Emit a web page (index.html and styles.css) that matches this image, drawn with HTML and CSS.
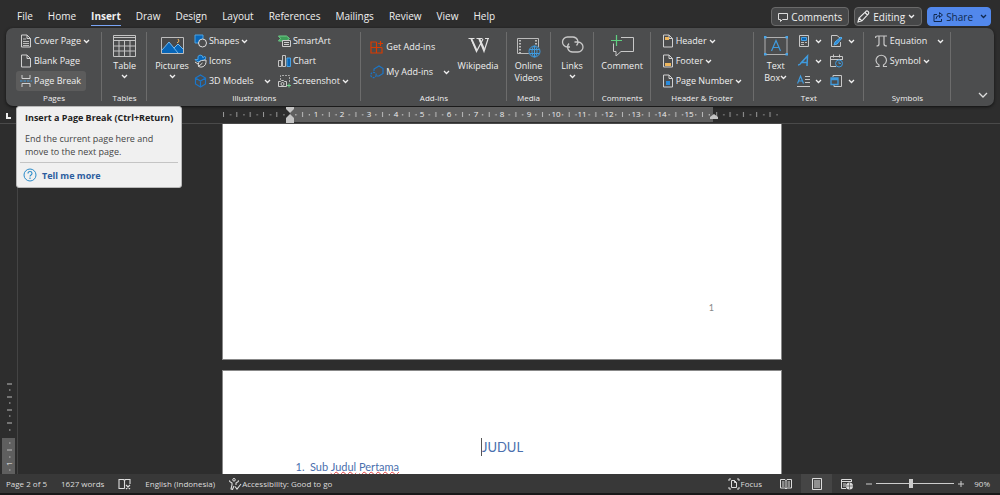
FILE: index.html
```html
<!DOCTYPE html>
<html lang="en">
<head>
<meta charset="utf-8">
<title>Document editor</title>
<link rel="stylesheet" href="styles.css">
</head>
<body>
<svg class="defs" aria-hidden="true">
  <symbol id="chev" viewBox="0 0 7 7"><path d="M1 2l2.500 2.500L6 2" fill="none" stroke="currentColor" stroke-width="1.300"/></symbol>
  <symbol id="sheet" viewBox="0 0 12 14"><path d="M1.500 1h5.500l3.500 3.500V13h-9zM7 1v3.500h3.500" fill="none" stroke="#d0d0d0"/></symbol>
</svg>

<header class="topbar">
  <nav class="tabs">
    <a href="#">File</a><a href="#">Home</a><a href="#" class="current">Insert</a><a href="#">Draw</a><a href="#">Design</a><a href="#">Layout</a><a href="#">References</a><a href="#">Mailings</a><a href="#">Review</a><a href="#">View</a><a href="#">Help</a>
  </nav>
  <div class="actions">
    <button class="action"><svg width="10" height="10" viewBox="0 0 10 10"><path d="M.5 1.500h9v6H4.500L2.500 9.500v-2h-2z" fill="none" stroke="#ddd"/></svg>Comments</button>
    <button class="action edit"><svg width="13" height="13" viewBox="0 0 13 13"><path d="M1 12l1-4L9 1.300q1-.8 2 .1l.4.4q.8 1 0 2L5 10.800zM8 2.500l2.500 2.500M2 8l3 2.800" fill="none" stroke="#eee" stroke-width="1.100"/></svg>Editing<svg class="chev"><use href="#chev"/></svg></button>
    <button class="action share"><svg width="10" height="10" viewBox="0 0 10 10"><path d="M4 2.500H1v7h7.500V7M3 7q0-3.500 3.500-3.500V5.500L9.500 3 6.500.600V2.500" fill="none" stroke="#10284e"/></svg>Share<svg class="chev far"><use href="#chev"/></svg></button>
  </div>
</header>

<main class="ribbon">
  <section class="group">
    <div class="body pages">
      <div class="stack">
        <button class="cmd"><svg width="12" height="14"><use href="#sheet"/><path d="M3 5h3M3 7.500h6M3 9.500h6M3 11.500h6" stroke="#bbb"/></svg>Cover Page<svg class="chev"><use href="#chev"/></svg></button>
        <button class="cmd"><svg width="12" height="14"><use href="#sheet"/></svg>Blank Page</button>
        <button class="cmd hover"><svg width="12" height="14"><path d="M2 1v3.500h8V1M2 13V9.500h8V13" fill="none" stroke="#d0d0d0"/><path d="M0 7h12" stroke="#3f9bdf" stroke-dasharray="2.500 1"/></svg>Page Break</button>
      </div>
    </div>
    <h2>Pages</h2>
  </section>

  <section class="group">
    <div class="body center">
      <button class="big"><svg width="23" height="24"><path d="M.5 1.500h22v21H.5zM.5 3.500h22M.5 6.500h22M.5 12h22M.5 17h22M6 6v16M11.500 6v16M17 6v16" fill="none" stroke="#c4c4c4"/></svg>Table<svg class="chev"><use href="#chev"/></svg></button>
    </div>
    <h2>Tables</h2>
  </section>

  <section class="group">
    <div class="body illus">
      <button class="big"><svg width="23" height="24"><path d="M.5 3.500h22v16H.5z" fill="#48494a" stroke="#bdbdbd"/><path d="M1 16l7-8 5 6 4-4 5 5v4H1z" fill="#0866b8"/><path d="M1 16l7-8 9 11M13 14l4-4 5 5" fill="none" stroke="#73b9ee"/><path d="M17 5l1 2-1 1.500h-1" fill="none" stroke="#f0b45a"/></svg>Pictures<svg class="chev"><use href="#chev"/></svg></button>
      <div class="stack models">
        <button class="cmd"><svg width="13" height="14"><path d="M1 1h8v8H1z" fill="#0866b8" stroke="#4ba2e2"/><circle cx="8.500" cy="9" r="4" fill="#4c4d4e" stroke="#ddd"/></svg>Shapes<svg class="chev"><use href="#chev"/></svg></button>
        <button class="cmd"><svg width="13" height="14"><path d="M1 5.500h3q-1-4 2-4.500 3 0 3 3l1.500-2L12 4 9 7.500H3z" fill="#0866b8" stroke="#4ba2e2"/><path d="M4.500 12.500q-1-5 3-6l4.500-.5q.5 6-4 7-2 .3-3.500-.5l4-3.500M1 8l3 2" fill="#4c4d4e" stroke="#ddd"/></svg>Icons</button>
        <button class="cmd"><svg width="13" height="14"><path d="M6.500 1l5 3v6l-5 3-5-3V4zM1.500 4l5 3 5-3M6.500 7v6" fill="none" stroke="#1b76c8" stroke-width="1.200"/></svg>3D Models<svg class="chev far"><use href="#chev"/></svg></button>
      </div>
      <div class="stack">
        <button class="cmd"><svg width="13" height="14"><path d="M.500 2h8l3 2.500-3 2.500H.500l2-2.500z" fill="#3f9c59" stroke="#6fd08a"/><path d="M4.500 6.500h8v6h-8zM6 8.500h5M6 10.500h5" fill="#4c4d4e" stroke="#ccc"/></svg>SmartArt</button>
        <button class="cmd"><svg width="13" height="14"><path d="M.5 6.500h3v6h-3zM4.500 1.500h3v11h-3z" fill="none" stroke="#c4c4c4"/><path d="M9 4h3.500v8.500H9z" fill="#0866b8" stroke="#4ba2e2"/></svg>Chart</button>
        <button class="cmd"><svg width="13" height="14"><path d="M2.500 6V1.500h9V9" fill="none" stroke="#aaa" stroke-dasharray="2 1"/><path d="M.5 7.500h2l1-1h2l1 1h2v5h-8z" fill="#4c4d4e" stroke="#ccc"/><circle cx="4.500" cy="10" r="1.500" fill="none" stroke="#ccc"/><path d="M11 9.500v4M9 11.500h4" stroke="#6fd08a"/></svg>Screenshot<svg class="chev"><use href="#chev"/></svg></button>
      </div>
    </div>
    <h2>Illustrations</h2>
  </section>

  <section class="group">
    <div class="body addins">
      <div class="stack loose">
        <button class="cmd"><svg width="14" height="14"><path d="M6.500 2H1v11h11V7.500M1 7.500h11M6.500 2v11M10.500 1v5M8 3.500h5" fill="none" stroke="#d83b01" stroke-width="1.200"/></svg>Get Add-ins</button>
        <button class="cmd"><svg width="14" height="14"><path d="M4 6V4l5-3 4 2.500v5L9 11H7" fill="none" stroke="#1b76c8" stroke-width="1.200"/><circle cx="3.500" cy="10" r="2.700" fill="none" stroke="#1b76c8" stroke-width="1.200" stroke-dasharray="2 1"/></svg>My Add-ins<svg class="chev far"><use href="#chev"/></svg></button>
      </div>
      <button class="big"><svg width="23" height="24"><path d="M1.500 4.500h6M9.500 4.500h6M18 4.500h4M4 4.500l5.500 13L16 5M12 5l5 12.500L21 5" fill="none" stroke="#e2e2e2" stroke-width="1.200"/><path d="M4.500 5l5 11M12.500 5l5 11" stroke="#e2e2e2" stroke-width="1.800"/></svg>Wikipedia</button>
    </div>
    <h2>Add-ins</h2>
  </section>

  <section class="group">
    <div class="body center">
      <button class="big"><svg width="24" height="24"><path d="M.5 4.500h21v15H.5z" fill="none" stroke="#bbb"/><path d="M3 6v13M19 6v8" stroke="#ddd" stroke-width="1.500" stroke-dasharray="1.500 1.500"/><circle cx="17.500" cy="17.500" r="6" fill="#4c4d4e"/><g fill="none" stroke="#3f9bdf"><circle cx="17.500" cy="17.500" r="5.500"/><ellipse cx="17.500" cy="17.500" rx="2.500" ry="5.500"/><path d="M12.500 15.500h10M12.500 19.500h10M17.500 12v11"/></g></svg><span>Online<br>Videos</span></button>
    </div>
    <h2>Media</h2>
  </section>

  <section class="group">
    <div class="body center">
      <button class="big"><svg width="23" height="24"><path d="M9 13H6.500a5 5 0 010-10H12a5 5 0 013.500 8.500M13.500 8H17a5 5 0 010 10h-5.500A5 5 0 018 9.500" fill="none" stroke="#c8c8c8" stroke-width="1.300"/></svg>Links<svg class="chev"><use href="#chev"/></svg></button>
    </div>
  </section>

  <section class="group">
    <div class="body center">
      <button class="big"><svg width="24" height="24"><path d="M11 3.500h12.500v14H11l-5 4.500v-4.500H3.500v-8" fill="none" stroke="#c8c8c8"/><path d="M6.500 1v11M1 6.500h11" stroke="#5fd080" stroke-width="1.200"/></svg>Comment</button>
    </div>
    <h2>Comments</h2>
  </section>

  <section class="group">
    <div class="body hf">
      <div class="stack">
        <button class="cmd"><svg width="12" height="14"><use href="#sheet"/><path d="M3 3h4v3H3z" fill="#eeb65d"/></svg>Header<svg class="chev"><use href="#chev"/></svg></button>
        <button class="cmd"><svg width="12" height="14"><use href="#sheet"/><path d="M3 9h6v3H3z" fill="#eeb65d"/></svg>Footer<svg class="chev"><use href="#chev"/></svg></button>
        <button class="cmd"><svg width="12" height="14"><use href="#sheet"/><path d="M4 7h4v4H4z" fill="#2a8bdc"/></svg>Page Number<svg class="chev"><use href="#chev"/></svg></button>
      </div>
    </div>
    <h2>Header &amp; Footer</h2>
  </section>

  <section class="group">
    <div class="body textg">
      <button class="big"><svg width="26" height="24"><path d="M2 3.500h22v17H2z" fill="none" stroke="#b0b0b0"/><path d="M1 2h2.500v2.500H1zM22.500 2H25v2.500h-2.500zM1 19h2.500v2.500H1zM22.500 19H25v2.500h-2.500z" fill="#49a6e9"/><path d="M8.500 17L13 6.500 17.500 17M10 13.500h6" fill="none" stroke="#3f9bdf" stroke-width="1.200"/></svg><span>Text<br>Box<svg class="chev"><use href="#chev"/></svg></span></button>
      <div class="stack">
        <button class="cmd" aria-label="Quick Parts"><svg width="13" height="14"><path d="M2.500 1.500h9v11h-9z" fill="none" stroke="#c8c8c8"/><path d="M4.500 3.500h5v3h-5z" fill="#0866b8" stroke="#4ba2e2"/><path d="M4 8.500h3M4 10.500h3M8 8.500h2" stroke="#bbb"/></svg><svg class="chev"><use href="#chev"/></svg></button>
        <button class="cmd" aria-label="WordArt"><svg width="13" height="14"><path d="M1 11q2 0 3-2l6.500-7-.5 10M4 8.500h6.500" fill="none" stroke="#3f9bdf" stroke-width="1.500"/></svg><svg class="chev"><use href="#chev"/></svg></button>
        <button class="cmd" aria-label="Drop Cap"><svg width="13" height="14"><path d="M.5 9.500L3.500 2l3 7.500M1.500 7h4" fill="none" stroke="#3f9bdf" stroke-width="1.200"/><path d="M8 2.500h5M8 5.500h5M8 8.500h5M0 12.500h13" stroke="#c8c8c8"/></svg><svg class="chev"><use href="#chev"/></svg></button>
      </div>
      <div class="stack">
        <button class="cmd" aria-label="Signature Line"><svg width="13" height="14"><path d="M7 1.500H1.500v11h9V8M7 1.500L10 4" fill="none" stroke="#c8c8c8"/><path d="M4 11l1-3 6-5 1 1-5 6z" fill="#2a8bdc" stroke="#55adea"/></svg><svg class="chev"><use href="#chev"/></svg></button>
        <button class="cmd" aria-label="Date and Time"><svg width="13" height="14"><path d="M6 12.500H.5v-10h12V6M.5 5.500h12M3.500.500v3M9.500.500v3" fill="none" stroke="#c8c8c8"/><circle cx="9" cy="9.500" r="3.500" fill="#4c4d4e" stroke="#3f9bdf"/><path d="M9 7.500v2h2" fill="none" stroke="#3f9bdf"/></svg></button>
        <button class="cmd" aria-label="Object"><svg width="13" height="14"><path d="M3 3V1.500h8.500v11H4V11" fill="none" stroke="#c8c8c8"/><path d="M1 4h7v6.500H1zM1 5.500h7" fill="#4c4d4e" stroke="#3f9bdf" stroke-width="1.300"/></svg><svg class="chev"><use href="#chev"/></svg></button>
      </div>
    </div>
    <h2>Text</h2>
  </section>

  <section class="group">
    <div class="body sym">
      <div class="stack">
        <button class="cmd"><svg width="13" height="14"><path d="M.5 4q0-2 2-2h9.500M4 2.500V10q0 2-2.500 2M9 2.500V10q0 2 3 2" fill="none" stroke="#c8c8c8" stroke-width="1.200"/></svg>Equation<svg class="chev far"><use href="#chev"/></svg></button>
        <button class="cmd"><svg width="13" height="14"><path d="M.5 12.500H4V11Q1 9 1 6.500A5.200 5.200 0 0111.500 6.500Q11.500 9 8.500 11v1.500H12" fill="none" stroke="#c8c8c8" stroke-width="1.200"/></svg>Symbol<svg class="chev"><use href="#chev"/></svg></button>
      </div>
    </div>
    <h2>Symbols</h2>
  </section>

  <div class="tail"><button aria-label="Collapse ribbon"><svg width="10" height="8"><path d="M1 2l4 4 4-4" fill="none" stroke="#ddd" stroke-width="1.300"/></svg></button></div>
</main>

<div class="tip" role="tooltip">
  <strong>Insert a Page Break (Ctrl+Return)</strong>
  <p>End the current page here and<br>move to the next page.</p>
  <a href="#"><svg width="14" height="14"><circle cx="7" cy="7" r="6" fill="none" stroke="#2a8bc9"/><path d="M5 5.500q0-2 2-2t2 1.800q0 1-1 1.700t-1 1.500M7 9.500V11" fill="none" stroke="#2a8bc9" stroke-width="1.100"/></svg>Tell me more</a>
</div>

<div class="ruler">
  <svg class="tabstop" width="18" height="17"><path d="M7 6v5h4" fill="none" stroke="#eee" stroke-width="2"/></svg>
  <div class="scale">
    <svg width="560" height="17" viewBox="0 0 560 17">
      <defs>
        <pattern id="edge" x="1" width="13.330" height="17" patternUnits="userSpaceOnUse"><path d="M.5 5v5" stroke="#999"/><path d="M7 7h1.200v1.500H7z" fill="#888"/></pattern>
        <pattern id="cm" x="67.300" width="26.660" height="17" patternUnits="userSpaceOnUse"><path d="M6 7h1.200v1.500H6zM19.500 7h1.200v1.500h-1.200z" fill="#bbb"/><path d="M13.300 5v5" stroke="#bbb"/></pattern>
      </defs>
      <path d="M0 0h63v17H0zM493 0h63v17h-63z" fill="url(#edge)"/>
      <path d="M68 0h423v15H68z" fill="#5f5f5f"/>
      <path d="M68 0h423v15H68z" fill="url(#cm)"/>
      <path d="M64 0h8v2l-4 4-4-4zM64 16v-5l4-4 4 4v5zM488 12v-2l4-3 4 3v2z" fill="#c4c4c4"/>
      <g class="nums"><text x="94" y="10">1</text><text x="120" y="10">2</text><text x="147" y="10">3</text><text x="174" y="10">4</text><text x="200" y="10">5</text><text x="227" y="10">6</text><text x="254" y="10">7</text><text x="280" y="10">8</text><text x="307" y="10">9</text><text x="334" y="10">10</text><text x="360" y="10">11</text><text x="387" y="10">12</text><text x="414" y="10">13</text><text x="440" y="10">14</text><text x="467" y="10">15</text></g>
    </svg>
  </div>
</div>

<div class="workspace">
  <div class="vruler">
    <svg width="17" height="94" viewBox="0 0 17 94">
      <path d="M2 58h13v36H2z" fill="#5f5f5f"/>
      <path d="M7 4h5M7 17h5M7 30h5M7 43h5M7 70h5" stroke="#bbb"/>
      <path d="M9 10h1.500M9 23h1.500M9 36h1.500M9 50h1.500M9 63h1.500M9 77h1.500M9 90h1.500" stroke="#bbb"/>
      <text class="vnum" transform="translate(12 86) rotate(-90)">1</text>
    </svg>
  </div>
  <div class="canvas">
    <article class="page first"><span class="folio">1</span></article>
    <article class="page second">
      <h1><span class="caret"></span>JUDUL</h1>
      <ol><li>Sub <u>Judul</u> <u>Pertama</u></li></ol>
    </article>
  </div>
</div>

<footer class="status">
  <span>Page 2 of 5</span>
  <span>1627 words</span>
  <button aria-label="Proofing"><svg width="13" height="12"><path d="M6.500 10.500H1v-9h4.500l1 1 1-1H12V6M6.500 2v8.500M8 7l4 4M12 7l-4 4" fill="none" stroke="#ddd" stroke-width="1.100"/></svg></button>
  <span>English (Indonesia)</span>
  <button class="access"><svg width="13" height="12"><circle cx="5" cy="1.800" r="1.300" fill="none" stroke="#ddd"/><path d="M1 2.500q-1 1 .5 1.500L3 5v2l-1 4 1.500.5L5 8M9 2.500q1 1-.5 1.500L7 5v2M6 8.500l2 2.500 4-5" fill="none" stroke="#ddd" stroke-width="1.100"/></svg>Accessibility: Good to go</button>
  <div class="views">
    <button class="focus"><svg width="12" height="12"><path d="M3 1H1v2M9 1h2v2M3 11H1V9M9 11h2V9" fill="none" stroke="#ddd"/><path d="M3.500 2.500h3l2 2v5h-5zM6.500 2.500v2h2" fill="none" stroke="#ddd"/></svg>Focus</button>
    <button class="view" aria-label="Read Mode"><svg width="12" height="12"><path d="M.5 1.500H5l1 1 1-1h4.500v8.500H7l-1 1-1-1H.5zM6 2v9M2 4h2.500M2 6h2.500M2 8h2.500M7.500 4H10M7.500 6H10M7.500 8H10" fill="none" stroke="#ddd"/></svg></button>
    <button class="view on" aria-label="Print Layout"><svg width="10" height="12"><path d="M.5.5h9v11h-9zM2 3h6M2 5h6M2 7h6M2 9h6" fill="none" stroke="#ddd"/></svg></button>
    <button class="view" aria-label="Web Layout"><svg width="13" height="12"><path d="M5 10.500H.5v-9h10V4M.5 3.500h10M2 6h3M2 8h3" fill="none" stroke="#ddd"/><circle cx="8.500" cy="8" r="3.500" fill="#ddd"/><path d="M5 8h7M8.500 4.500v7" stroke="#555" stroke-width=".7"/></svg></button>
    <button class="step" aria-label="Zoom out"><svg width="8" height="8"><path d="M1 4h6" stroke="#ccc"/></svg></button>
    <input type="range" min="0" max="100" value="45" aria-label="Zoom">
    <button class="step" aria-label="Zoom in"><svg width="8" height="8"><path d="M1 4h6M4 1v6" stroke="#ccc"/></svg></button>
    <span class="pct">90%</span>
  </div>
</footer>
</body>
</html>
```
FILE: styles.css
```css
* { box-sizing: border-box; }

body {
  margin: 0;
  height: 100vh;
  display: flex;
  flex-direction: column;
  overflow: hidden;
  background: #2d2d2d;
  color: #f0f0f0;
  font: 9px/14px "Open Sans", "Noto Sans", sans-serif;
}

button {
  display: flex;
  align-items: center;
  padding: 0;
  border: 0;
  background: none;
  color: inherit;
  font: inherit;
  white-space: nowrap;
}

svg { flex: none; }
.defs { position: absolute; width: 0; height: 0; }
.chev { width: 7px; height: 7px; }

/* Tabs and document actions */
.topbar {
  flex: none;
  height: 28px;
  padding: 0 9px 0 17px;
  display: flex;
  justify-content: space-between;
}
.tabs { display: flex; gap: 15px; padding-top: 9px; font-size: 10px; line-height: 15px; }
.tabs a { height: 17px; color: #f0f0f0; text-decoration: none; }
.tabs .current { font-weight: 700; border-bottom: 1px solid #7aa5f5; }
.actions { display: flex; gap: 5px; padding-top: 7px; }
.action {
  height: 19px;
  gap: 3px;
  padding: 0 6px;
  border: 1px solid #6a6a6a;
  border-radius: 4px;
  background: #464748;
  font-size: 10px;
}
.edit { padding: 0 6px 0 2px; }
.share { background: #5288ec; border-color: #5288ec; color: #10284e; padding: 0 3px 0 5px; }
.action .far { margin-left: 4px; }

/* Ribbon */
.ribbon {
  flex: none;
  height: 78px;
  margin: 0 6px;
  display: grid;
  grid-template-columns: 96fr 45fr 214fr 145fr 44fr 43fr 57fr 103fr 110fr 87fr 43fr;
  border-radius: 7px;
  background: #4c4d4e;
  box-shadow: 0 1px 3px #111;
}
.group {
  position: relative;
  min-width: 0;
  padding-top: 3px;
  display: flex;
  flex-direction: column;
  justify-content: space-between;
}
.group::after {
  content: "";
  position: absolute;
  right: 0;
  top: 4px;
  bottom: 5px;
  width: 1px;
  background: #6c6c6c;
}
.group h2 {
  margin: 0;
  height: 15px;
  font-size: 8px;
  line-height: 14px;
  font-weight: 400;
  text-align: center;
}
.body { display: flex; height: 60px; }
.center { justify-content: center; }
.stack { display: flex; flex-direction: column; }
.cmd { height: 20px; gap: 2px; }
.loose { padding-top: 6px; gap: 5px; }
.big { flex-direction: column; padding-top: 3px; line-height: 12px; }
.big > svg:first-child { margin-bottom: 2px; }
.big > .chev { margin-top: 1px; }
.pages { padding-left: 10px; }
.pages .cmd { width: 70px; padding-left: 4px; }
.hover { border-radius: 3px; background: #5c5c5c; }
.illus { padding-left: 8px; }
.illus .models { width: 84px; margin-left: 5px; }
.models .far, .addins .far, .sym .far { margin-left: 8px; }
.addins { padding: 0 8px 0 9px; justify-content: space-between; }
.hf { padding-left: 11px; }
.textg { padding-left: 9px; gap: 8px; }
.textg .cmd { gap: 5px; }
.sym { padding-left: 11px; }
.tail { display: flex; align-items: flex-end; justify-content: flex-end; padding: 0 6px 7px 0; }

/* Tooltip */
.tip {
  position: absolute;
  left: 16px;
  top: 106px;
  z-index: 2;
  width: 166px;
  padding: 4px 3px 3px;
  border: 1px solid #b8b8b8;
  border-radius: 3px;
  background: #f0f0f0;
  color: #444;
  white-space: nowrap;
  line-height: 13px;
}
.tip strong { display: block; padding-left: 5px; color: #222; }
.tip p { margin: 8px 0 3px; padding: 0 5px 4px; border-bottom: 1px solid #c4c4c4; }
.tip a { display: flex; align-items: center; gap: 5px; height: 18px; padding-left: 3px; color: #2b5c9e; font-weight: 700; text-decoration: none; }

/* Rulers and document */
.ruler { flex: none; display: flex; height: 18px; padding: 1px 14px 0 0; border-bottom: 1px solid #4a4a4a; }
.scale { flex: 1; display: flex; justify-content: center; }
.nums { fill: #eee; font-size: 8px; text-anchor: middle; }
.vnum { fill: #eee; font-size: 8px; }
.workspace { flex: 1; min-height: 0; display: flex; overflow: hidden; }
.vruler { width: 18px; border-right: 1px solid #444; display: flex; align-items: flex-end; }
.canvas { flex: 1; padding-right: 14px; display: flex; flex-direction: column; align-items: center; gap: 10px; }
.page { width: 100%; max-width: 560px; border: 1px solid #888; background: #fff; color: #4a6fae; font-family: Lato, sans-serif; }
.first { flex: none; height: 236px; padding: 177px 67px 0; border-top: 0; text-align: right; }
.folio { color: #888; }
.second { flex: 1; padding: 67px 67px 0; border-bottom: 0; }
.page h1 { display: flex; justify-content: center; align-items: center; margin: 0; font-size: 13px; line-height: 18px; font-weight: 400; }
.caret { width: 1px; height: 18px; background: #555; }
.page ol { margin: 4px 0 0; padding-left: 20px; font-size: 11px; line-height: 14px; }
.page li { padding-left: 0; }
.page li::marker { content: "1.\2002"; }
.page u { text-decoration: underline wavy #e04040 1px; text-decoration-skip-ink: none; text-underline-offset: 0; }

/* Status bar */
.status {
  flex: none;
  height: 21px;
  padding: 0 10px 0 6px;
  display: flex;
  align-items: center;
  gap: 14px;
  border-bottom: 2px solid #191919;
  background: #383838;
  font-size: 8px;
  color: #ddd;
}
.views { margin-left: auto; display: flex; align-items: center; height: 19px; }
.focus { gap: 1px; margin-right: 8px; }
.view { width: 31px; height: 19px; justify-content: center; }
.on { background: #454545; }
.step { width: 12px; justify-content: center; }
.views input { appearance: none; width: 78px; height: 10px; margin: 0 1px; background: linear-gradient(#ccc, #ccc) center / 100% 1px no-repeat; }
.views input::-webkit-slider-thumb { appearance: none; width: 4px; height: 9px; background: #ccc; }
.pct { width: 18px; margin-left: 5px; text-align: right; }
```
